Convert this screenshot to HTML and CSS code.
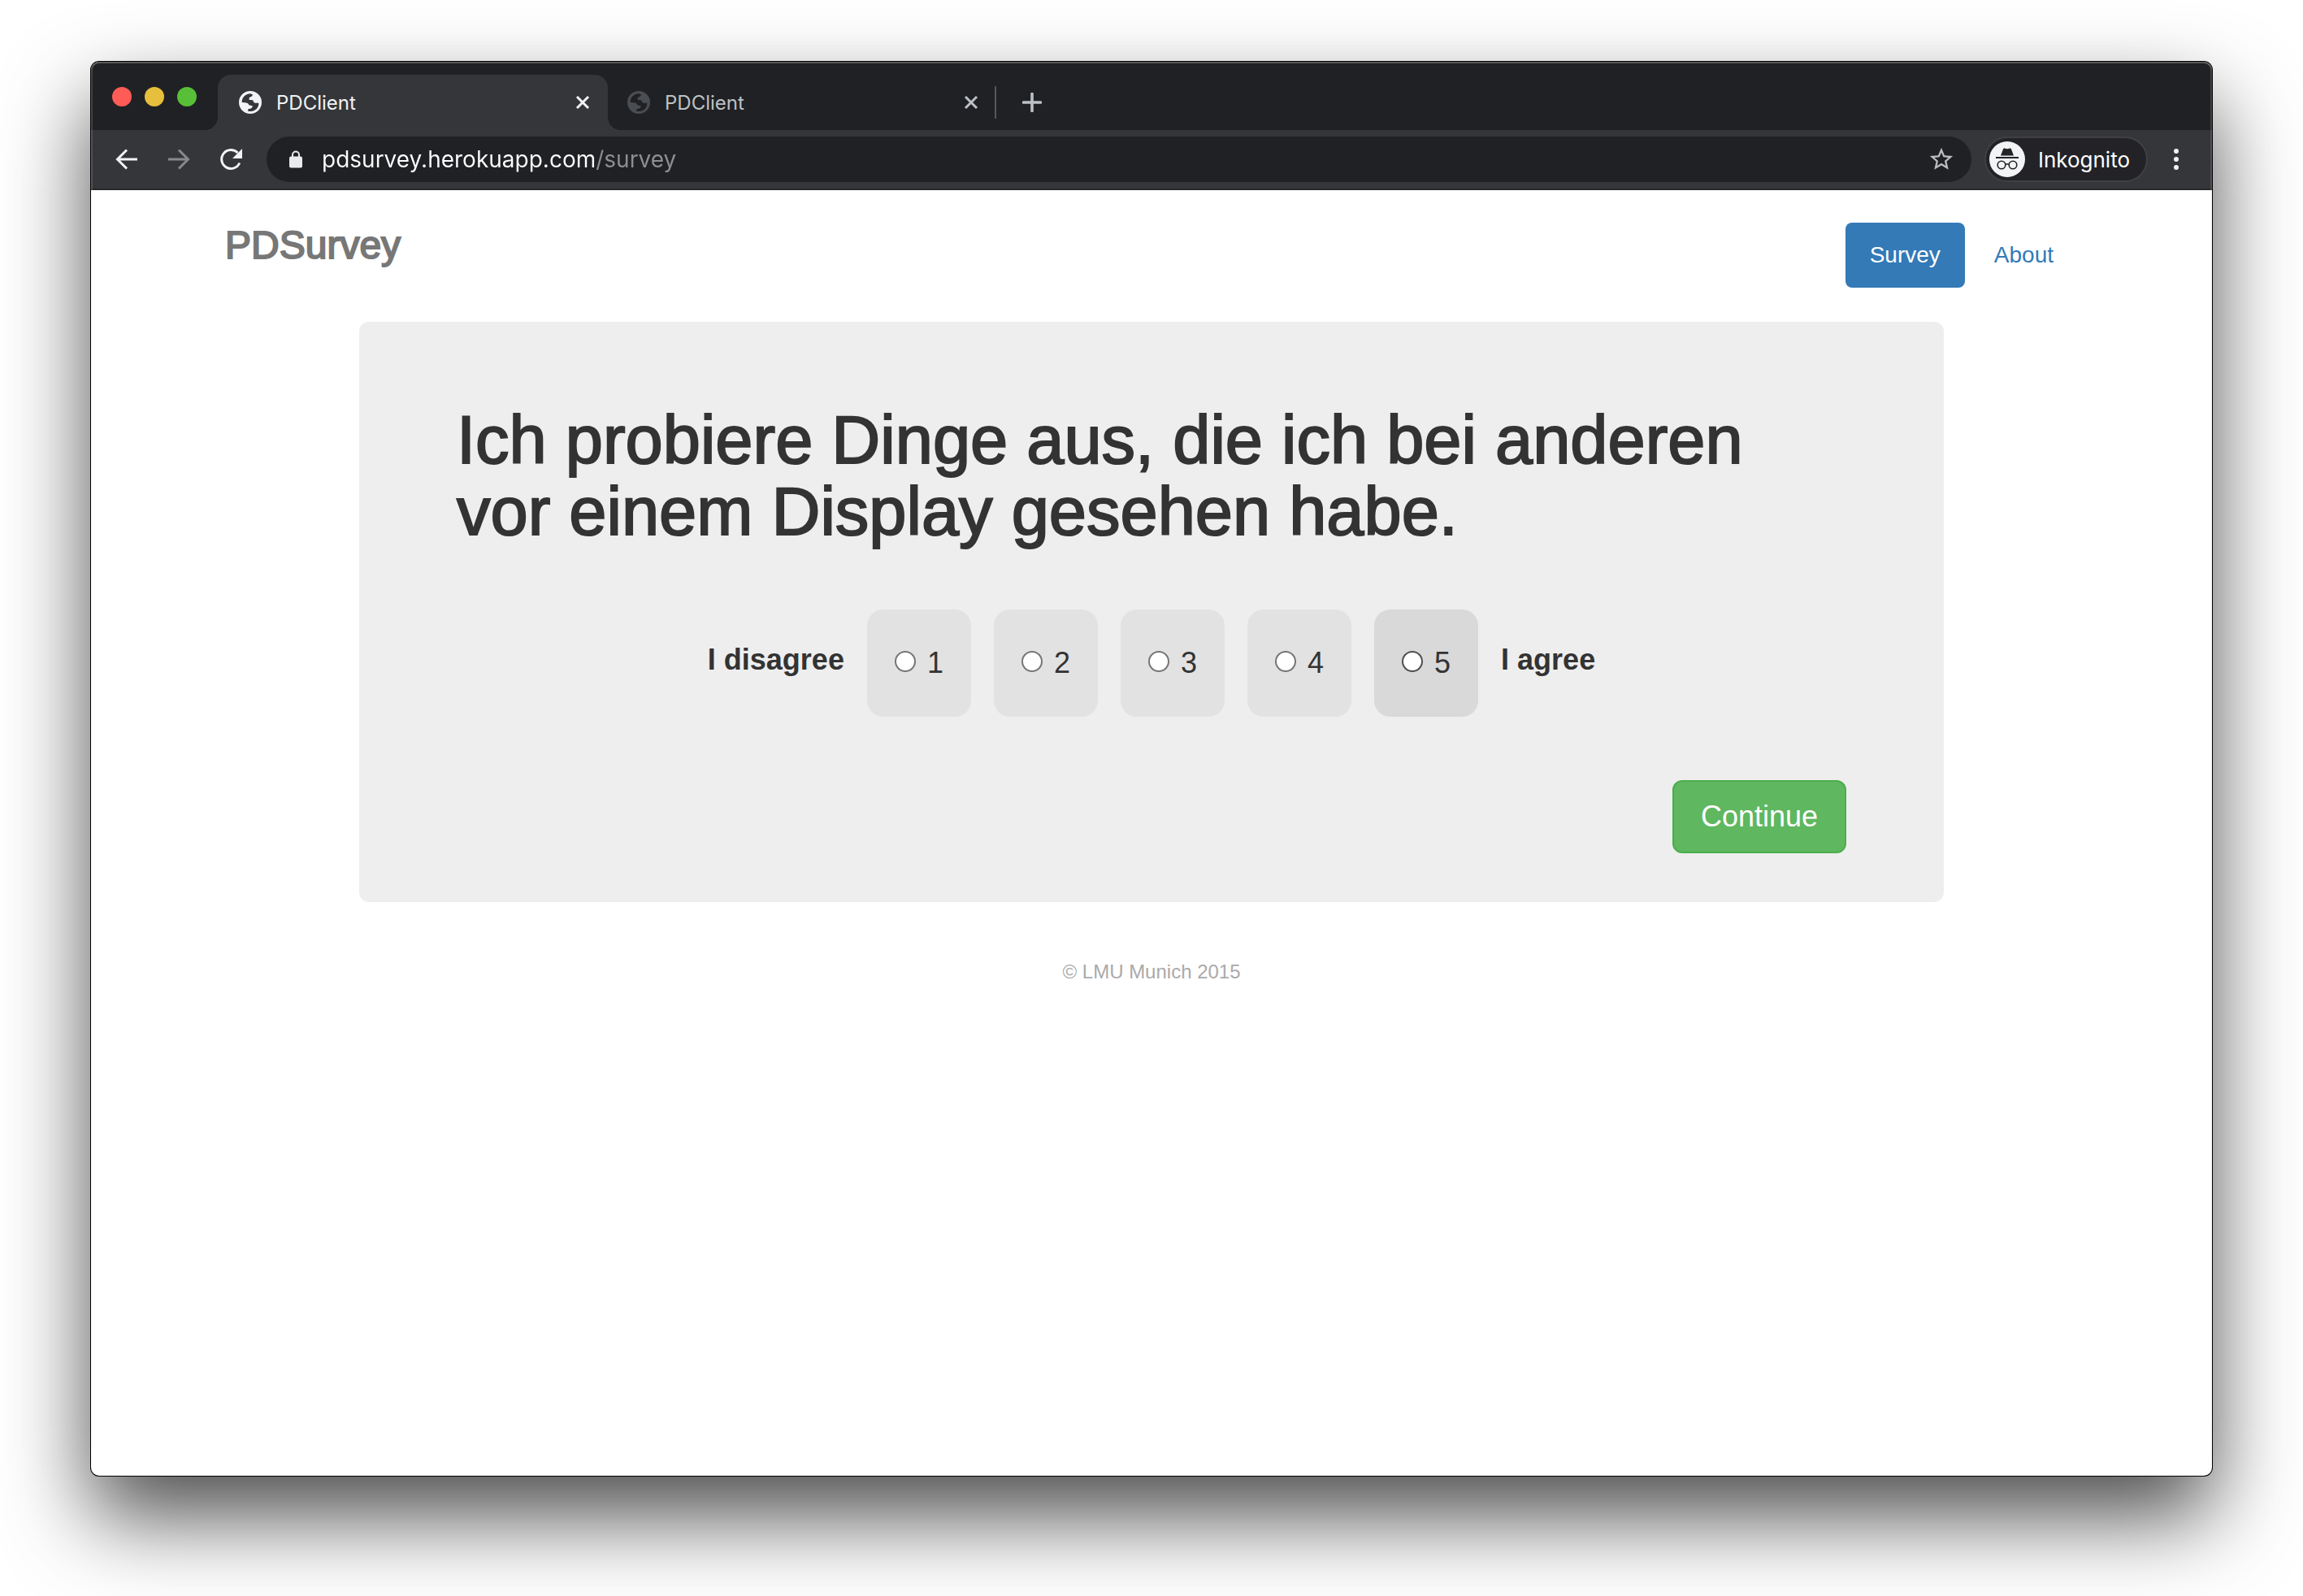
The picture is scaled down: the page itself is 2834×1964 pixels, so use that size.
FILE: index.html
```html
<!DOCTYPE html>
<html lang="de">
<head>
<meta charset="utf-8">
<title>PDClient</title>
<link rel="stylesheet" href="styles.css">
</head>
<body>
<svg class="sprite" aria-hidden="true">
  <symbol id="globe" viewBox="0 0 84 84">
    <path fill="currentColor" fill-rule="evenodd" d="M42 0a42 42 0 1 1 0 84a42 42 0 1 1 0-84zM11 42C11 24 23 11 42 10L51 13C50 20 44 23 38 24V33H48C54 34 53 42 58 44H73C74 60 62 73 44 75H34V66C46 66 50 62 50 54C44 54 38 54 35 48C33 43 22 43 11 42z"/>
  </symbol>
  <symbol id="cross" viewBox="0 0 18 18">
    <path d="M2 2l14 14M16 2L2 16" fill="none" stroke="currentColor" stroke-width="3"/>
  </symbol>
</svg>
<div class="window">
  <header class="chrome">
    <div class="tabstrip">
      <div class="lights">
        <button class="light close" aria-label="Close window"></button>
        <button class="light minimize" aria-label="Minimize window"></button>
        <button class="light maximize" aria-label="Maximize window"></button>
      </div>
      <div class="tab active">
        <svg class="favicon"><use href="#globe"/></svg>
        <span class="tab-title">PDClient</span>
        <button class="tab-close" aria-label="Close tab"><svg class="cross"><use href="#cross"/></svg></button>
      </div>
      <div class="tab">
        <svg class="favicon"><use href="#globe"/></svg>
        <span class="tab-title">PDClient</span>
        <button class="tab-close" aria-label="Close tab"><svg class="cross"><use href="#cross"/></svg></button>
      </div>
      <span class="separator"></span>
      <button class="new-tab" aria-label="New tab">
        <svg width="24" height="24" viewBox="0 0 24 24"><path d="M12 1.500v21M1.500 12h21" stroke="currentColor" stroke-width="3.600" stroke-linecap="round"/></svg>
      </button>
    </div>
    <div class="toolbar">
      <button class="tool" aria-label="Back">
        <svg width="32" height="32" viewBox="0 0 32 32"><path d="M29 16H5M16 4.500L4.500 16L16 27.500" fill="none" stroke="currentColor" stroke-width="3"/></svg>
      </button>
      <button class="tool disabled" aria-label="Forward">
        <svg width="32" height="32" viewBox="0 0 32 32"><path d="M3 16h24M16 4.500L27.500 16L16 27.500" fill="none" stroke="currentColor" stroke-width="3"/></svg>
      </button>
      <button class="tool" aria-label="Reload">
        <svg width="32" height="32" viewBox="0 0 32 32"><path d="M26.800 20.500A11.500 11.500 0 1 1 24.500 8" fill="none" stroke="currentColor" stroke-width="3"/><path d="M30 3v12H18z" fill="currentColor"/></svg>
      </button>
      <div class="omnibox">
        <svg width="16" height="22" viewBox="0 0 16 22"><path d="M4 9V5.500a4 4 0 0 1 8 0V9" fill="none" stroke="currentColor" stroke-width="2"/><rect y="7.500" width="16" height="14" rx="2" fill="currentColor"/></svg>
        <input class="url" type="text" aria-label="Address" value="pdsurvey.herokuapp.com/survey">
        <button class="star" aria-label="Bookmark">
          <svg width="34" height="34" viewBox="0 0 24 24"><path fill="currentColor" d="M22 9.240l-7.190-.62L12 2 9.190 8.630 2 9.240l5.460 4.730L5.820 21 12 17.270 18.180 21l-1.630-7.030L22 9.240zM12 15.400l-3.760 2.270 1-4.280-3.320-2.880 4.380-.38L12 6.100l1.710 4.040 4.380.38-3.320 2.880 1 4.280L12 15.400z"/></svg>
        </button>
      </div>
      <button class="profile">
        <svg width="44" height="44" viewBox="0 0 44 44">
          <circle cx="22" cy="22" r="22" fill="#f1f3f4"/>
          <path d="M14 17.500L17 9.500Q17.500 8 19 8.500Q22 10 25 8.500Q26.500 8 27 9.500L30 17.500z" fill="#232327"/>
          <path d="M8 20h28" stroke="#232327" stroke-width="2"/>
          <g fill="none" stroke="#232327" stroke-width="1.600"><circle cx="15" cy="29" r="4.800"/><circle cx="29" cy="29" r="4.800"/><path d="M20 28.500Q22 27 24 28.500"/></g>
        </svg>
        Inkognito
      </button>
      <button class="menu" aria-label="Menu">
        <svg width="6" height="28" viewBox="0 0 6 28" fill="currentColor"><circle cx="3" cy="4" r="3"/><circle cx="3" cy="14" r="3"/><circle cx="3" cy="24" r="3"/></svg>
      </button>
    </div>
  </header>
  <div class="container">
    <div class="header">
      <h3 class="brand">PDSurvey</h3>
      <nav class="nav">
        <a class="nav-link current" href="#survey">Survey</a>
        <a class="nav-link" href="#about">About</a>
      </nav>
    </div>
    <form class="jumbotron">
      <h1 class="question">Ich probiere Dinge aus, die ich bei anderen vor einem Display gesehen habe.</h1>
      <div class="scale" role="radiogroup" aria-label="Antwort">
        <strong class="pole">I disagree</strong>
        <label class="option"><input type="radio" name="answer" value="1">1</label>
        <label class="option"><input type="radio" name="answer" value="2">2</label>
        <label class="option"><input type="radio" name="answer" value="3">3</label>
        <label class="option"><input type="radio" name="answer" value="4">4</label>
        <label class="option hovered"><input type="radio" name="answer" value="5">5</label>
        <strong class="pole">I agree</strong>
      </div>
      <div class="actions"><button class="continue" type="button">Continue</button></div>
    </form>
    <footer class="footer">© LMU Munich 2015</footer>
  </div>
</div>
</body>
</html>
```
FILE: styles.css
```css
* { box-sizing: border-box; }

body {
  margin: 0;
  padding: 76px 112px 148px;
  background: #fff;
  color: #333;
  font-family: "Liberation Sans", Arial, sans-serif;
}

button {
  padding: 0;
  border: 0;
  background: none;
  color: inherit;
  font: inherit;
}

svg { display: block; flex: none; }
.sprite { display: none; }

.window {
  min-height: calc(100vh - 224px);
  overflow: hidden;
  border-radius: 10px;
  background: #fff;
  box-shadow: 0 0 0 1px #000, 0 50px 105px rgba(0, 0, 0, .7);
}

/* Browser chrome */
.chrome {
  position: relative;
  background: #35363a;
  border-bottom: 2px solid #28292c;
  color: #f1f3f4;
  font-family: Inter, sans-serif;
}

.chrome::after {
  content: "";
  position: absolute;
  inset: 0 0 -2px;
  border-radius: 10px 10px 0 0;
  box-shadow: inset 0 2px rgba(255, 255, 255, .25), inset 2px 0 rgba(255, 255, 255, .15), inset -2px 0 rgba(255, 255, 255, .15);
  pointer-events: none;
}

.tabstrip {
  display: flex;
  align-items: flex-end;
  height: 84px;
  background: #202124;
}

.lights {
  display: flex;
  align-self: center;
  gap: 16px;
  padding: 2px 26px 0;
}

.light { width: 24px; height: 24px; border-radius: 50%; }
.close { background: #ff5c58; }
.minimize { background: #e6bf3c; }
.maximize { background: #57c038; }

.tab {
  position: relative;
  display: flex;
  align-items: center;
  width: 476px;
  height: 68px;
  padding: 0 20px 0 24px;
  color: #bdc1c6;
  font-size: 24px;
}

.tab.active {
  width: 480px;
  padding: 0 22px 0 26px;
  border-radius: 16px 16px 0 0;
  background: #35363a;
  color: #f1f3f4;
}

.tab.active::before,
.tab.active::after {
  content: "";
  position: absolute;
  bottom: 0;
  width: 16px;
  height: 16px;
}

.tab.active::before {
  right: 100%;
  background: radial-gradient(circle at 0 0, transparent 16px, #35363a 16px);
}

.tab.active::after {
  left: 100%;
  background: radial-gradient(circle at 100% 0, transparent 16px, #35363a 16px);
}

.favicon { width: 28px; height: 28px; color: #4a4d51; }
.active .favicon { color: #f1f3f4; }
.tab-title { flex: 1; padding-left: 18px; }
.cross { width: 18px; height: 18px; }
.separator { width: 2px; height: 40px; margin-bottom: 14px; background: #55575b; }
.new-tab { margin: 0 0 22px 32px; color: #bdc1c6; }

.toolbar {
  display: flex;
  align-items: center;
  height: 72px;
  padding: 0 41px 0 28px;
}

.tool { margin-right: 32px; }
.disabled { color: #88898c; }

.omnibox {
  flex: 1;
  display: flex;
  align-items: center;
  height: 56px;
  margin-left: -4px;
  padding: 0 20px 0 28px;
  border-radius: 28px;
  background: #202124;
  color: #e8eaed;
}

.url {
  flex: 1;
  margin-left: 24px;
  padding: 0;
  border: 0;
  outline: 0;
  background: linear-gradient(90deg, #fff 335px, #8e8f92 335px);
  -webkit-background-clip: text;
  background-clip: text;
  color: transparent;
  font: 28px/40px Inter, sans-serif;
}

.star { color: #bdbdbf; }

.profile {
  display: flex;
  align-items: center;
  gap: 16px;
  height: 56px;
  margin-left: 16px;
  padding: 0 20px 0 4px;
  border: 2px solid #3f4044;
  border-radius: 28px;
  background: #232327;
  color: #fff;
  font-size: 26px;
}

.menu { margin-left: 32px; }

/* Survey page */
.container {
  max-width: 2280px;
  margin: 0 auto;
  padding-top: 40px;
}

.header {
  display: flex;
  justify-content: space-between;
  align-items: flex-start;
}

.brand {
  margin: 0;
  color: #777;
  font-size: 48px;
  font-weight: 400;
  line-height: 56px;
  -webkit-text-stroke: 2px currentColor;
}

.nav { display: flex; gap: 6px; }

.nav-link {
  padding: 20px 30px;
  border-radius: 8px;
  color: #337ab7;
  font-size: 28px;
  line-height: 40px;
  text-decoration: none;
}

.nav-link.current { background: #337ab7; color: #fff; }

.jumbotron {
  max-width: 1950px;
  margin: 42px auto 0;
  padding: 102px 120px 60px;
  border-radius: 12px;
  background: #eee;
}

.question {
  margin: 0;
  font-size: 83px;
  font-weight: 400;
  line-height: 88px;
  -webkit-text-stroke: 2px currentColor;
}

.scale {
  display: flex;
  justify-content: center;
  gap: 28px;
  margin-top: 76px;
  font-size: 36px;
}

.pole { line-height: 124px; }

.option {
  display: flex;
  align-items: center;
  height: 132px;
  padding: 0 34px;
  border-radius: 20px;
  background: #e2e2e2;
}

.option input {
  appearance: none;
  width: 26px;
  height: 26px;
  margin: 0 14px 4px 0;
  border: 2px solid #767676;
  border-radius: 50%;
  background: #fff;
}

.option input:checked { box-shadow: inset 0 0 0 5px #fff; background: #337ab7; }
.option.hovered { background: #d9d9d9; }
.option.hovered input { border-color: #4f4f4f; }

.actions { display: flex; justify-content: flex-end; margin-top: 78px; }

.continue {
  height: 90px;
  padding: 0 33px;
  border: 2px solid #4cae4c;
  border-radius: 12px;
  background: #5fb760;
  color: #fff;
  font-size: 36px;
}

.footer {
  padding: 68px 0 40px;
  color: #aaa;
  font-size: 24px;
  line-height: 36px;
  text-align: center;
}
```
